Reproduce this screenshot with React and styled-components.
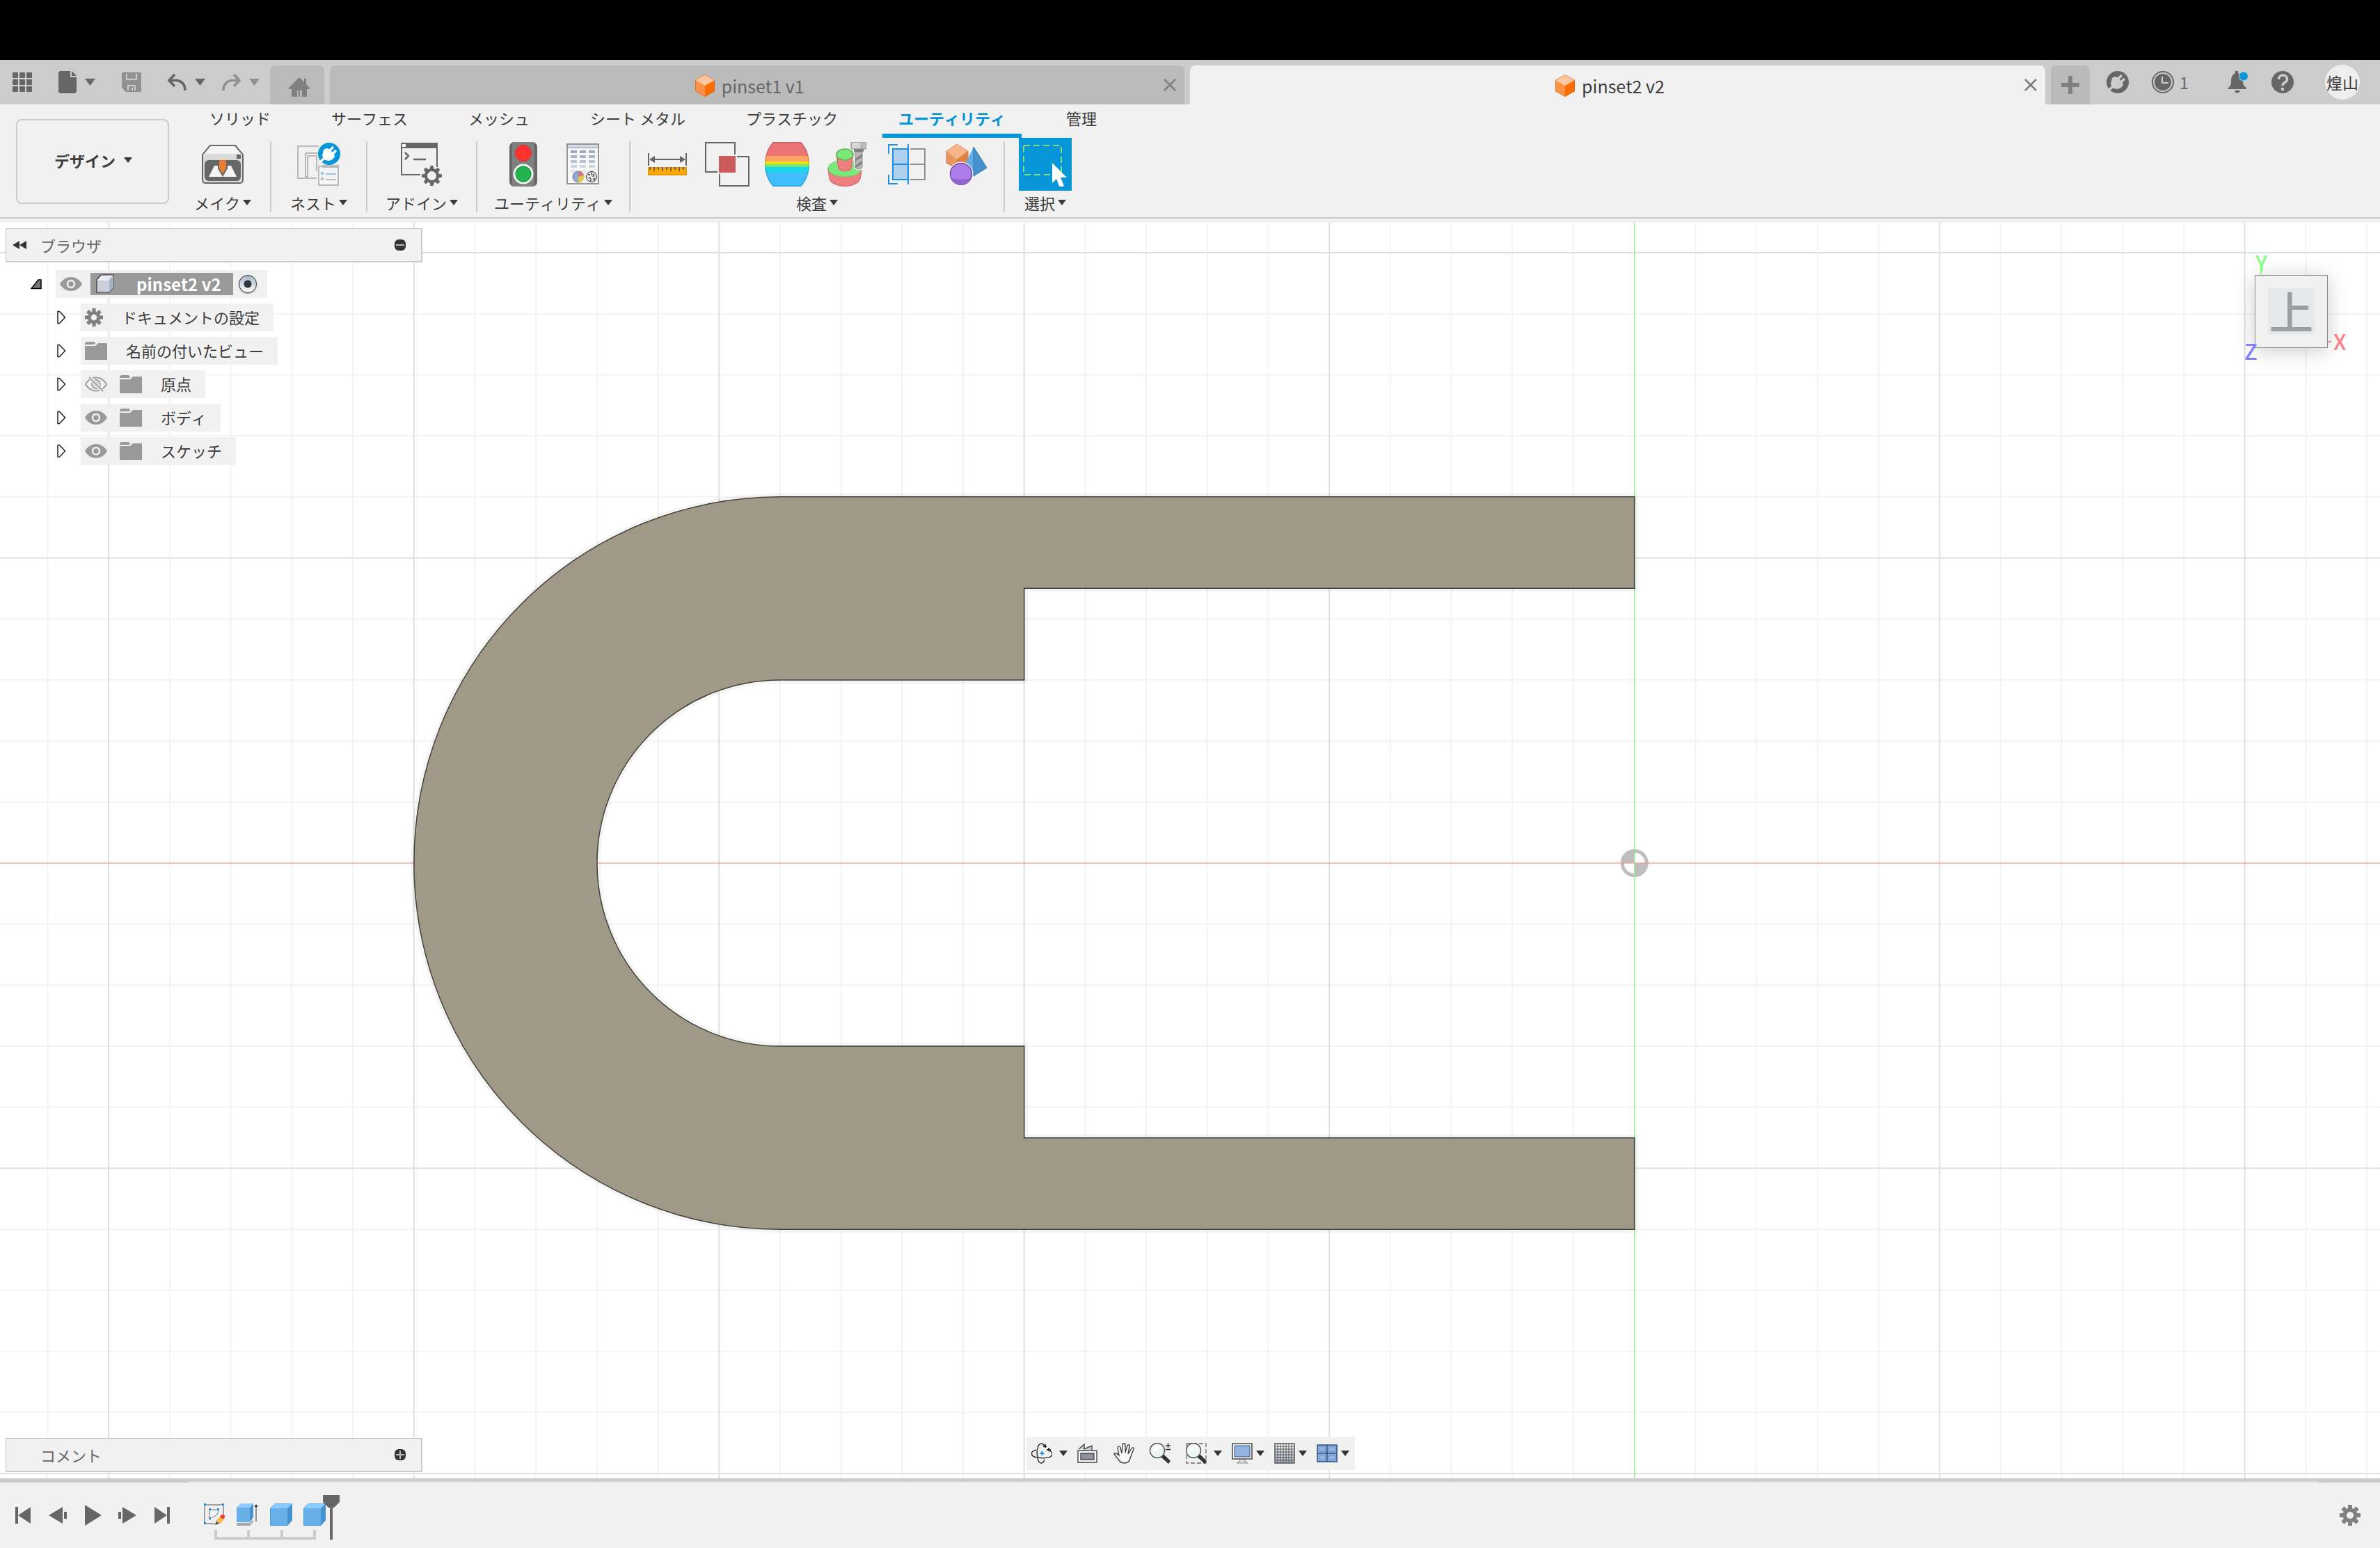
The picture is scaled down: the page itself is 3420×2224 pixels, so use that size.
import React from "react";
import styled, { createGlobalStyle } from "styled-components";

const GlobalStyle = createGlobalStyle`
  * { box-sizing: border-box; }
  html, body { margin: 0; }
  body {
    font-family: "Noto Sans CJK JP", "Noto Sans", sans-serif;
    font-size: 22px;
    font-kerning: none;
    line-height: 32px;
    color: #3c3c3c;
    background: #f1f1f1;
  }
  button {
    margin: 0;
    padding: 0;
    border: 0;
    background: none;
    font: inherit;
    font-kerning: none;
    color: inherit;
    cursor: pointer;
  }
  svg { display: block; flex: none; }
`;

/* ---------- layout ---------- */

const Screen = styled.div`
  display: flex;
  flex-direction: column;
  min-height: 100vh;
`;

const SystemStrip = styled.div`
  height: 86px;
  background: #000;
`;

const TitleBar = styled.header`
  display: flex;
  align-items: center;
  height: 64px;
  background: #ccc;
`;

const QuickAccess = styled.div`
  display: flex;
  align-items: center;
  gap: 38px;
  padding: 0 15px 0 18px;
`;

const History = styled.div`
  display: flex;
  gap: 24px;
`;

const QuickButton = styled.button`
  display: flex;
  align-items: center;
  gap: 12px;
  color: ${(p) => (p.$faded ? "#909090" : "#666")};
`;

const DocumentTabs = styled.nav`
  display: flex;
  flex: 1;
  align-self: flex-end;
  gap: 8px;
`;

const SmallTab = styled.button`
  display: flex;
  align-items: center;
  justify-content: center;
  width: ${(p) => p.$width};
  height: 56px;
  padding: ${(p) => (p.$low ? "6px 0 0 6px" : "0")};
  border-radius: 8px 8px 0 0;
  background: #bababa;
  color: #808080;
`;

const DocumentTab = styled.div`
  display: flex;
  flex: 1;
  align-items: center;
  height: 56px;
  padding: 0 12px 0 8px;
  border-radius: 8px 8px 0 0;
  background: ${(p) => (p.$active ? "#f1f1f1" : "#bababa")};
  color: ${(p) => (p.$active ? "#3c3c3c" : "#666")};
`;

const TabTitle = styled.button`
  display: flex;
  flex: 1;
  align-items: center;
  justify-content: center;
  gap: 10px;
  padding-top: 2px;
  font-size: 25px;
`;

const TabClose = styled.button`
  color: #808080;
`;

const Status = styled.div`
  display: flex;
  align-items: center;
  gap: 33px;
  padding: 0 29px 0 24px;
  color: #666;
`;

const StatusButton = styled.button`
  display: flex;
  align-items: center;
  gap: 8px;
  margin-left: ${(p) => (p.$spaced ? "21px" : "0")};
  font-size: 24px;
`;

const Avatar = styled.button`
  width: 50px;
  height: 50px;
  margin-left: 12px;
  border-radius: 50%;
  background: #eee;
  color: #3c3c3c;
  font-size: 23px;
  line-height: 48px;
  white-space: nowrap;
`;

const Ribbon = styled.section`
  display: flex;
  align-items: flex-start;
  height: 170px;
  border-bottom: 6px solid #f1f1f1;
  box-shadow: inset 0 -2px 0 #ccc;
  background: #f1f1f1;
`;

const Workspace = styled.button`
  display: flex;
  align-items: center;
  justify-content: center;
  gap: 12px;
  width: 220px;
  height: 122px;
  margin: 21px 9px 0 23px;
  padding: 0 0 4px 2px;
  border: 2px solid #ccc;
  border-radius: 8px;
  font-weight: 700;
`;

const RibbonBody = styled.div`
  flex: 1;
`;

const RibbonTabs = styled.nav`
  display: flex;
  gap: 41px;
  padding-left: 26px;
`;

const RibbonTab = styled.button`
  height: 48px;
  padding: 0 23px 4px;
  border-bottom: 6px solid ${(p) => (p.$active ? "#0696d7" : "transparent")};
  color: ${(p) => (p.$active ? "#0696d7" : "#3c3c3c")};
  font-weight: ${(p) => (p.$active ? 700 : 400)};
`;

const Groups = styled.div`
  display: flex;
`;

const Group = styled.div`
  display: flex;
  flex-direction: column;
  align-items: center;
  gap: 2px;
  height: 108px;
  padding: 0 ${(p) => p.$pad}px;
`;

const GroupDivider = styled.div`
  width: 2px;
  height: 102px;
  margin-top: 5px;
  background: #ccc;
`;

const ToolRow = styled.div`
  display: flex;
  gap: 10px;
`;

const Tool = styled.button`
  display: grid;
  place-items: center;
  width: 76px;
  height: 76px;
  background: ${(p) => (p.$active ? "#0696d7" : "none")};
`;

const GroupLabel = styled.button`
  display: flex;
  align-items: center;
  gap: 4px;
  line-height: 30px;
  white-space: nowrap;
`;

const Viewport = styled.main`
  position: relative;
  display: flex;
  flex: 1;
  flex-direction: column;
  justify-content: space-between;
  padding: 8px 0 9px 8px;
  background: #fff;
`;

const Scene = styled.svg`
  position: absolute;
  inset: 0;
  width: 100%;
  height: 100%;
`;

const Docked = styled.div`
  position: relative;
`;

const PanelBar = styled.div`
  display: flex;
  align-items: center;
  width: 599px;
  height: 49px;
  padding: 0 22px 0 9px;
  border: 1px solid #c0c0c0;
  border-right: 2px solid #ccc;
  border-bottom: 2px solid #ccc;
  background: #f1f1f1;
  color: #666;
`;

const PanelArrow = styled.button`
  width: 20px;
  height: 20px;
  margin-right: 20px;
  display: grid;
  place-items: center;
`;

const PanelName = styled.span`
  flex: 1;
`;

const Tree = styled.ul`
  display: flex;
  flex-direction: column;
  gap: 8px;
  margin: 11px 0 0;
  padding: 0;
  list-style: none;
`;

const TreeRow = styled.li`
  display: flex;
  align-items: center;
  padding-left: ${(p) => (p.$root ? "36px" : "73px")};
`;

const Twisty = styled.button`
  width: ${(p) => (p.$root ? "36px" : "35px")};
`;

const TreeItem = styled.div`
  display: flex;
  align-items: center;
  height: 40px;
  padding: 0 ${(p) => (p.$root ? "15px" : "20px")} 0 6px;
  background: #f1f1f1;
`;

const EyeButton = styled.button`
  margin-right: ${(p) => (p.$root ? "12px" : "18px")};
`;

const NodeIcon = styled.span`
  color: #808080;
`;

const NodeLabel = styled.span`
  padding: 0 0 2px 27px;
`;

const RootName = styled.label`
  display: flex;
  align-items: center;
  gap: 32px;
  height: 32px;
  margin-right: 8px;
  padding: 0 17px 0 8px;
  background: #999;
  color: #fff;
  font-size: 24px;
  font-weight: 700;
`;

const ActiveRadio = styled.input`
  appearance: none;
  width: 26px;
  height: 26px;
  margin: 0;
  border: 1px solid #333;
  border-radius: 50%;
  background: radial-gradient(circle, #30343c 0 5px, transparent 6px),
    linear-gradient(#a9b2c6, #fff);
  box-shadow: 0 1px 2px #999;
`;

const ViewCube = styled.div`
  position: absolute;
  top: 75px;
  right: 75px;
  width: 105px;
  height: 105px;
`;

const CubeFace = styled.button`
  display: grid;
  place-items: center;
  width: 105px;
  height: 105px;
  border: 1px solid #888;
  background: rgba(240, 240, 240, 0.95);
  box-shadow: 0 4px 28px rgba(0, 0, 0, 0.2);
`;

const CubeLabel = styled.span`
  width: 67px;
  height: 67px;
  background: #e7e8ec;
  color: #9a9fa4;
  font-size: 64px;
  font-weight: 500;
  line-height: 62px;
`;

const Axis = styled.span`
  position: absolute;
  left: ${(p) => p.$x}px;
  top: ${(p) => p.$y}px;
  color: ${(p) => p.$color};
  font-size: 31px;
  font-weight: 500;
`;

const AxisTick = styled.span`
  position: absolute;
  left: ${(p) => p.$x}px;
  top: ${(p) => p.$y}px;
  width: ${(p) => p.$w}px;
  height: ${(p) => p.$h}px;
  background: ${(p) => p.$color};
`;

const BottomRow = styled.div`
  position: relative;
  display: grid;
  grid-template-columns: 1fr auto 1fr;
  align-items: end;
  padding-right: 6px;
`;

const NavBar = styled.div`
  display: flex;
  align-items: center;
  gap: 14px;
  height: 48px;
  margin-bottom: 3px;
  padding: 0 8px 0 7px;
  background: #f1f1f1;
`;

const NavPlain = styled.div`
  display: flex;
  gap: 22px;
`;

const NavButton = styled.button`
  display: flex;
  align-items: center;
  gap: ${(p) => (p.$wide ? "10px" : "5px")};
  color: #333;
`;

const Timeline = styled.footer`
  display: flex;
  height: 100px;
  border-top: 4px solid #cacaca;
`;

const Playback = styled.div`
  display: flex;
  align-items: center;
  gap: 24px;
  width: 270px;
  padding-left: 20px;
  border-top: 2px solid #cacaca;
  color: #666;
`;

const Track = styled.div`
  display: flex;
  flex: 1;
  align-items: flex-start;
  padding: 18px 0 0 22px;
  border-top: 2px solid #ddd;
`;

const Features = styled.div`
  padding-top: 12px;
`;

const FeatureRow = styled.div`
  display: flex;
  gap: 16px;
`;

const Bracket = styled.div`
  display: grid;
  grid-template-columns: repeat(3, 1fr);
  width: 146px;
  height: 14px;
  margin: 6px 0 0 16px;
  border: 4px solid #ccc;
  border-width: 0 4px 4px 0;
`;

const BracketTick = styled.span`
  border-left: 4px solid #ccc;
`;

const Playhead = styled.button`
  margin-left: -4px;
`;

const TimelineSettings = styled.button`
  display: flex;
  align-items: center;
  width: 90px;
  padding-left: 32px;
  border-top: 2px solid #cacaca;
  color: #808080;
`;

/* ---------- small glyphs ---------- */

const Caret = ({ w = 12, h = 8 }) => (
  <svg width={w} height={h} viewBox="0 0 12 8" preserveAspectRatio="none" fill="currentColor"><path d="M0 0h12L6 8z" /></svg>
);

const toothAngles = [0, 45, 90, 135, 180, 225, 270, 315];

const Gear = ({ size, hole = "#f1f1f1" }) => (
  <svg width={size} height={size} viewBox="0 0 30 30" fill="currentColor">
    {toothAngles.map((a) => <rect key={a} x="12" y="0" width="6" height="8" transform={`rotate(${a} 15 15)`} />)}
    <circle cx="15" cy="15" r="10.5" />
    <circle cx="15" cy="15" r="5" fill={hole} />
  </svg>
);

const Folder = () => (
  <svg width="32" height="26" viewBox="0 0 32 26" fill="#999">
    <path d="M2 0h11l2 2-1 2H0V2z" />
    <path d="M0 6h15l4-4h13v24H0z" />
  </svg>
);

const Eye = () => (
  <svg width="32" height="20" viewBox="0 0 32 20">
    <path d="M0 10C4 3 10 0 16 0s12 3 16 10c-4 7-10 10-16 10S4 17 0 10z" fill="#999" />
    <circle cx="16" cy="10" r="5" fill="none" stroke="#f1f1f1" strokeWidth="2.5" />
  </svg>
);

const EyeOff = () => (
  <svg width="32" height="22" viewBox="0 0 32 22" fill="none" stroke="#999" strokeWidth="1.8">
    <path d="M1 11C5 4 10 1.500 16 1.500S27 4 31 11c-4 7-9 9.500-15 9.500S5 18 1 11z" />
    <circle cx="16" cy="11" r="6" />
    <circle cx="16" cy="11" r="2.500" />
    <path d="M6 0l20 22" stroke="#f1f1f1" strokeWidth="5" />
    <path d="M6 1l20 20" />
  </svg>
);

const OrangeCube = () => (
  <svg width="28" height="32" viewBox="0 0 28 32">
    <path d="M14 0l14 8-14 8L0 8z" fill="#ffc8a0" />
    <path d="M0 8l14 8v16L0 24z" fill="#ff9248" />
    <path d="M28 8l-14 8v16l14-8z" fill="#ff6c00" />
    <path d="M14 .500l13.500 7.700v15.600L14 31.500.500 23.800V8.200z" fill="none" stroke="#c9640f" strokeOpacity=".6" />
  </svg>
);

const Cross = () => (
  <svg width="18" height="18" viewBox="0 0 18 18" stroke="currentColor" strokeWidth="2.600"><path d="M1 1l16 16M17 1L1 17" /></svg>
);

const AppGrid = () => (
  <svg width="28" height="28" viewBox="0 0 28 28" fill="currentColor">
    {[0, 10, 20].map((y) => [0, 10, 20].map((x) => <rect key={`${x}-${y}`} x={x} y={y} width="8" height="8" rx="1" />))}
  </svg>
);

const FileGlyph = () => (
  <svg width="26" height="32" viewBox="0 0 26 32" fill="currentColor"><path d="M2 0h15v9h9v21l-2 2H2l-2-2V2z" /><path d="M19 0l7 7h-7z" /></svg>
);

const SaveGlyph = () => (
  <svg width="28" height="28" viewBox="0 0 28 28">
    <path d="M1 0h26l1 1v26l-1 1H6l-6-6V1z" fill="currentColor" />
    <path d="M7 2v8h14V2M9 26v-7h10v7" fill="none" stroke="#ccc" strokeWidth="2" />
    <path d="M15 22v4" stroke="#ccc" strokeWidth="2" />
  </svg>
);

const UndoGlyph = ({ flip }) => (
  <svg width="27" height="24" viewBox="0 0 27 24" fill="none" stroke="currentColor" strokeWidth="3.600">
    <path transform={flip ? "matrix(-1 0 0 1 27 0)" : undefined} d="M10 1L2 9.500l8 8.500M2 9.500h9c9 0 14 6 14 14.500" />
  </svg>
);

const HomeGlyph = () => (
  <svg width="30" height="28" viewBox="0 0 30 28" fill="#808080">
    <path d="M15 0l7 7V2h3v8l5 5v2h-4v11h-7v-9h-7v9H4V17H0v-2z" /><path d="M14 19h2v9h-2z" />
  </svg>
);

const PlusGlyph = () => (
  <svg width="26" height="26" viewBox="0 0 26 26" fill="currentColor"><path d="M10 0h6v10h10v6H16v10h-6V16H0v-6h10z" /></svg>
);

const PlugShape = () => (
  <>
    <path d="M8 10l4-2 4 1 7 7 1 4-3 4-5 2-6-1-4-6z" />
    <path d="M9 22l-6 6M16 12l6-6M20 17l6-6" stroke="currentColor" strokeWidth="3.500" />
  </>
);

const ExtensionGlyph = () => (
  <svg width="32" height="32" viewBox="0 0 32 32">
    <circle cx="16" cy="16" r="16" fill="#666" />
    <g fill="#ccc" color="#ccc"><PlugShape /></g>
  </svg>
);

const ClockGlyph = () => (
  <svg width="32" height="32" viewBox="0 0 32 32">
    <circle cx="16" cy="16" r="15" fill="none" stroke="#666" strokeWidth="2" />
    <circle cx="16" cy="16" r="12" fill="#666" />
    <path d="M15 8v9h9" fill="none" stroke="#ccc" strokeWidth="2" />
  </svg>
);

const BellGlyph = () => (
  <svg width="32" height="32" viewBox="0 0 32 32">
    <path d="M13 0h4v3c5 2 7 6 7 12 0 5 2 7 5 9v2H3v-2c3-2 4-4 4-9 0-6 2-10 6-12zM12 28h8c-1 5-7 5-8 0z" fill="#666" />
    <circle cx="25" cy="7.500" r="7" fill="#ccc" /><circle cx="25" cy="7.500" r="6" fill="#0696d7" />
  </svg>
);

const HelpGlyph = () => (
  <svg width="32" height="32" viewBox="0 0 32 32">
    <circle cx="16" cy="16" r="16" fill="#666" />
    <path d="M10.500 12c0-8 12-8 12 0 0 5-6.500 4-6.500 9" fill="none" stroke="#ccc" strokeWidth="3.600" />
    <path d="M14 24h4v4h-4z" fill="#ccc" />
  </svg>
);

/* ---------- ribbon tools ---------- */

const MakeIcon = () => (
  <svg width="60" height="56" viewBox="0 0 60 56">
    <path d="M12 1h36l11 13v36q0 5-5 5H6q-5 0-5-5V14z" fill="#f4f4f4" stroke="#666" strokeWidth="2" />
    <path d="M2 13h56v37q0 4-4 4H6q-4 0-4-4z" fill="#dadada" />
    <rect x="4" y="22" width="52" height="30" rx="6" fill="#666" />
    <path d="M18 30h24l8 16H10z" fill="#f4f4f4" />
    <path d="M24 23h12v11l-6 10-6-10z" fill="#e87c32" stroke="#666" strokeWidth="2" />
    <path d="M25 23h10" stroke="#e87c32" strokeWidth="2" />
    <rect x="50" y="14" width="6" height="6" fill="#666" />
  </svg>
);

const NestIcon = () => (
  <svg width="62" height="62" viewBox="0 0 62 62" fill="none">
    <path d="M31 5H1v46h11V15h18M16 49h-4M15 51V19h13v22M28 51H12" stroke="#bababa" strokeWidth="2" />
    <rect x="31" y="34" width="28" height="27" stroke="#bababa" strokeWidth="2" fill="#f4f4f4" />
    <path d="M36 32h24v4H36z" fill="#bababa" />
    <path d="M34 42h4v4h-4z" fill="#96c8ee" /><path d="M41 45h15" stroke="#96c8ee" strokeWidth="2" />
    <path d="M34 50h4v4h-4z" fill="#bababa" /><path d="M41 53h15" stroke="#bababa" strokeWidth="2" />
    <circle cx="46" cy="16" r="16" fill="#0696d7" />
    <g transform="translate(30 0)" fill="#fff" color="#fff"><PlugShape /></g>
  </svg>
);

const AddInIcon = () => (
  <svg width="60" height="63" viewBox="0 0 60 63">
    <path d="M1 1h51v34M1 1v45h27" fill="none" stroke="#666" strokeWidth="2" />
    <path d="M0 0h53v8H0z" fill="#666" /><path d="M2 2h5v4H2z" fill="#fff" />
    <path d="M6 14l5 5-5 5M18 24h18" fill="none" stroke="#666" strokeWidth="2.500" />
    <g transform="translate(30 33)" fill="#666">
      {toothAngles.map((a) => <path key={a} d="M12.500 0h4l1.500 7h-7z" transform={`rotate(${a} 14.500 14.500)`} />)}
      <circle cx="14.500" cy="14.500" r="8.500" fill="#f1f1f1" stroke="#666" strokeWidth="4" />
    </g>
  </svg>
);

const TrafficIcon = () => (
  <svg width="40" height="64" viewBox="0 0 40 64">
    <rect width="40" height="64" rx="7" fill="#666" /><rect x="4" width="32" height="64" rx="4" fill="#808080" />
    <circle cx="20" cy="16" r="11.500" fill="#ff3232" stroke="#d12a2a" />
    <circle cx="20" cy="46" r="13" fill="#24b352" stroke="#f4f4f4" strokeWidth="3" />
    <circle cx="20" cy="46" r="11" fill="none" stroke="#189a40" />
  </svg>
);

const SheetIcon = () => (
  <svg width="48" height="60" viewBox="0 0 48 60">
    <path d="M1 1h45v57H1z" fill="#f7f8fa" stroke="#777" strokeWidth="1.500" />
    <path d="M2 2h43v4H2z" fill="#d4d9e6" /><path d="M2 6.500h43" stroke="#8d94a4" />
    {["#a0a9c0", "#aab4c8", "#bac1d2", "#ced3e0", "#e4e6ee"].map((c, i) => (
      <path key={c} d={`M6 ${10 + i * 7}h9v4H6zm13 0h9v4h-9zm13 0h9v4h-9z`} fill={c} />
    ))}
    <circle cx="17" cy="48" r="8" fill="#8ea9d8" stroke="#777" />
    <path d="M17 48v-8a8 8 0 0 1 8 6z" fill="#d07582" /><path d="M17 48l8-2a8 8 0 0 1-8 10z" fill="#e9c93d" />
    <circle cx="36" cy="48" r="7.500" fill="#e4e4e4" stroke="#333" />
    <path d="M31 44l3 2m2-4l1 4m3-2l-2 4m-6 1l3 2m3 1l3-2m-7 4l2-2m4 2l1-2" stroke="#333" strokeWidth="1.300" />
  </svg>
);

const MeasureIcon = () => (
  <svg width="56" height="32" viewBox="0 0 56 32">
    <path d="M1 0v18M55 0v18M6 9h44" stroke="#666" strokeWidth="2" />
    <path d="M2 9l8-5v10zM54 9l-8-5v10z" fill="#666" />
    <path d="M1 21h54v10H1z" fill="#ffa900" stroke="#e79a08" strokeWidth="2" />
    <path d="M3 20v4M9 20v6M15 20v4M21 20v6M27 20v4M33 20v6M39 20v4M45 20v6M51 20v4" stroke="#666" strokeWidth="2" />
  </svg>
);

const InterferenceIcon = () => (
  <svg width="64" height="64" viewBox="0 0 64 64" fill="none" stroke="#666" strokeWidth="2">
    <path d="M18 43H1V1h42v17M46 21h17v42H21V46" /><path d="M20 20h24v24H20z" fill="#cd5b5b" stroke="none" />
  </svg>
);

const barrel = "M12 0h40c16 16 16 48 0 64H12C-4 48-4 16 12 0z";

const CurvatureIcon = () => (
  <svg width="64" height="64" viewBox="0 0 64 64">
    <clipPath id="barrel"><path d={barrel} /></clipPath>
    <g clipPath="url(#barrel)">
      <path d="M0 0h64v20H0z" fill="#eb7474" /><path d="M0 20h64v8H0z" fill="#ffa264" />
      <path d="M0 28h64v4H0z" fill="#ebe416" /><path d="M0 32h64v4H0z" fill="#72e878" />
      <path d="M0 36h64v8H0z" fill="#18d6e8" /><path d="M0 44h64v20H0z" fill="#40bdff" />
      <path d={barrel} fill="none" stroke="#000" strokeOpacity=".15" strokeWidth="3" />
    </g>
  </svg>
);

const AccessIcon = () => (
  <svg width="56" height="64" viewBox="0 0 56 64">
    <path d="M1 38l2 14c3 15 41 15 44 0l2-14z" fill="#f08080" stroke="#d76c6c" strokeWidth="1.500" />
    <ellipse cx="25" cy="38" rx="24" ry="12" fill="#7de87a" stroke="#67c965" />
    <path d="M13 17l3 20c2 6 16 6 18 0l3-20z" fill="#f08080" stroke="#d76c6c" strokeWidth="1.500" />
    <ellipse cx="25" cy="18" rx="12" ry="8" fill="#7de87a" stroke="#58b356" strokeWidth="1.500" />
    <path d="M38 13h14v25q-7 5-14 0z" fill="#f4f4f4" />
    <path d="M40 14h10v23q-5 4-10 0z" fill="#b8b8b8" stroke="#888" />
    <path d="M40 24l10-7v4l-10 7zM40 34l10-7v4l-10 7z" fill="#808080" />
    <path d="M38 10h14v4H38z" fill="#808080" /><path d="M34 0h22v10H34z" fill="#bababa" stroke="#909090" /><path d="M35 1h12v8H35z" fill="#d8d8d8" />
  </svg>
);

const SectionIcon = () => (
  <svg width="54" height="58" viewBox="0 0 54 58" fill="none" stroke="#1a90e6" strokeWidth="2">
    <path d="M7 7h22v44H7z" fill="#aed1ee" /><path d="M32 7h21v44H32M32 29h21" stroke="#909090" />
    <path d="M7 29h22M29 0v58M1 14V1h13M1 44v13h13" />
  </svg>
);

const ComponentsIcon = () => (
  <svg width="60" height="60" viewBox="0 0 60 60">
    <path d="M16 1l16 10v18L16 36 1 28V11z" fill="#e89560" stroke="#c47a48" />
    <path d="M16 1l16 10-16 12L1 11z" fill="#f7b587" /><path d="M16 23l16-12v18l-16 7z" fill="#dc8245" />
    <path d="M40 5L25 36l15 12z" fill="#66aee6" /><path d="M40 5l19 30-19 12z" fill="#4592cf" stroke="#2f78b4" />
    <circle cx="22" cy="44" r="17.500" fill="#f4f4f4" /><circle cx="22" cy="44" r="15.500" fill="#ab7ee8" stroke="#6f47a8" strokeWidth="1.500" />
    <path d="M7 50q15 4 30 0c-5 13-25 13-30 0z" fill="#8f63cf" />
  </svg>
);

const SelectIcon = () => (
  <svg width="64" height="64" viewBox="0 0 64 64">
    <path d="M1 5h54v42H1z" fill="none" stroke="#80e080" strokeWidth="2" strokeDasharray="9 5" />
    <path d="M42 30v29l6-6 5 13 6-3-5-12h9z" fill="#fff" />
  </svg>
);

/* ---------- navigation tools ---------- */

const OrbitIcon = () => (
  <svg width="30" height="30" viewBox="0 0 30 30" fill="none" stroke="#333" strokeWidth="1.500">
    <path d="M19 24c-3 8-9 6-10-3C7 12 9 1 14.500 1c2 0 3.500 1.500 4.500 4" /><path d="M7 10C-3 13-1 20 9 21c11 2 21 0 21-5 0-2-2-4-5-5" />
    <path d="M17 5h5M20 2v5M22 10h6M25 7v5" strokeWidth="2" /><path d="M15.500 12v6M12.500 15h6" stroke="#1a90e6" strokeWidth="2" />
  </svg>
);

const LookAtIcon = () => (
  <svg width="30" height="30" viewBox="0 0 30 30" stroke="#444" strokeWidth="1.400">
    <path d="M2 9l8-7v7l11-5v6" fill="#ccd2da" /><path d="M1 11h27v17H1z" fill="#fff" /><path d="M5 15h19v9H5z" fill="#8d929e" />
  </svg>
);

const HandIcon = () => (
  <svg width="30" height="30" viewBox="0 0 30 30">
    <path d="M8 25L1 16c0-2 3-2 7 2L6 7c0-2 3-3 4 0l2 8L13 3c0-3 4-3 4 0v11l3-10c1-2 4-2 3 1l-2 11 5-8c1-2 4-1 3 1l-5 13c-1 5-4 7-8 7-4 0-6-1-8-4z" fill="#f8f8f8" stroke="#444" strokeWidth="1.400" />
  </svg>
);

const Lens = () => (
  <><path d="M18 18l3-1 9 9-3 4-10-9z" fill="#333" /><circle cx="11" cy="11" r="10.500" fill="#ecf6f4" stroke="#555" strokeWidth="1.500" /><path d="M5 8q3-5 8-5 4 1 5 4-7 0-11 6z" fill="#fff" /></>
);

const ZoomIcon = () => (
  <svg width="30" height="30" viewBox="0 0 30 30"><Lens /><path d="M23 4h7M26.500 0v7M23 9.500h7" stroke="#333" strokeWidth="1.300" /></svg>
);

const ZoomWindowIcon = () => (
  <svg width="30" height="30" viewBox="0 0 30 30"><path d="M1 1h28v28H1z" fill="none" stroke="#666" strokeDasharray="6 3" strokeWidth="1.300" /><Lens /></svg>
);

const MonitorIcon = () => (
  <svg width="30" height="30" viewBox="0 0 30 30" stroke="#444"><path d="M11 23h8v4l4 2H7l4-2z" fill="#ddd" stroke="#888" /><path d="M1 1h28v22H1z" fill="#fff" strokeWidth="1.500" /><path d="M4 4h22v16H4z" fill="#92b4de" stroke="#2d4e80" /></svg>
);

const GridIcon = () => (
  <svg width="30" height="30" viewBox="0 0 30 30" stroke="#555">
    <defs><linearGradient id="gridFade" x2="0" y2="1"><stop stopColor="#fff" /><stop offset="1" stopColor="#a9b2c9" /></linearGradient></defs>
    <path d="M1 1h28v28H1z" fill="url(#gridFade)" strokeWidth="1.500" /><path d="M5 1v28M9 1v28M13 1v28M17 1v28M21 1v28M25 1v28M1 5h28M1 9h28M1 13h28M1 17h28M1 21h28M1 25h28" />
  </svg>
);

const ViewportsIcon = () => (
  <svg width="30" height="26" viewBox="0 0 30 26" fill="#92b4de" stroke="#2d4e80"><path d="M1 1h28v24H1z" strokeWidth="1.500" /><path d="M15 1v24M1 13h28" strokeWidth="1.500" /><path d="M3.500 3.500h9v7h-9zM17.500 3.500h9v7h-9zM3.500 15.500h9v7h-9zM17.500 15.500h9v7h-9z" stroke="#6a8fc4" /></svg>
);

/* ---------- timeline features ---------- */

const SketchFeature = () => (
  <svg width="32" height="32" viewBox="0 0 32 32" fill="none">
    <path d="M2 2h27v18M2 2v27h15" stroke="#888" strokeWidth="1.500" /><path d="M9 9h13q0 10-13 12z" stroke="#777" />
    <path d="M1 0h3v3H1zM27 0h3v3h-3zM1 27h3v3H1zM8 7h3v3H8zM20 7h3v3h-3zM8 20h3v3H8z" fill="#1a90e6" />
    <path d="M17 31l2-6 4 4z" fill="#555" /><path d="M19 25l6-7 5 4-6 7z" fill="#fcbf4a" stroke="#d99a20" strokeWidth=".6" /><circle cx="28" cy="19" r="3" fill="#fa3232" />
  </svg>
);

const ExtrudeFeature = () => (
  <svg width="32" height="32" viewBox="0 0 32 32">
    <path d="M0 28h19l5-5v4l-5 5H0z" fill="#aaa" /><path d="M0 6l6-6h18l-5 6z" fill="#8ccaff" /><path d="M19 6l5-6v20l-5 7z" fill="#4592cf" />
    <path d="M0 6h19v21H0z" fill="#69afe8" /><path d="M28 26V4" stroke="#333" /><path d="M25.500 5L28 1l2.500 4z" fill="#333" />
  </svg>
);

const SolidFeature = () => (
  <svg width="32" height="32" viewBox="0 0 32 32">
    <path d="M0 7l7-7h25l-7 7z" fill="#8ccaff" /><path d="M25 7l7-7v24l-7 8z" fill="#4592cf" /><path d="M0 7h25v25H0z" fill="#69afe8" />
    <path d="M.500 7.500L7 .500h24.500v24l-6.500 7H.500z" fill="none" stroke="#4592cf" strokeOpacity=".6" />
  </svg>
);

/* ---------- model scene ---------- */

const UNIT = 87.7;
const ORIGIN = { x: 2348.7, y: 920 };
const steps = (from, to) => Array.from({ length: to - from + 1 }, (_, i) => from + i);
const px = (n) => ORIGIN.x + n * UNIT;
const py = (n) => ORIGIN.y - n * UNIT;

const bodyPath = [
  `M${px(0)} ${py(6)}H${px(-14)}`,
  `A${6 * UNIT} ${6 * UNIT} 0 0 0 ${px(-14)} ${py(-6)}`,
  `H${px(0)}V${py(-4.5)}H${px(-10)}V${py(-3)}H${px(-14)}`,
  `A${3 * UNIT} ${3 * UNIT} 0 0 1 ${px(-14)} ${py(3)}`,
  `H${px(-10)}V${py(4.5)}H${px(0)}Z`,
].join("");

const gridTone = (n) => (n % 5 === 0 ? "#e0e0e0" : "#f3f3f3");

const ModelScene = () => (
  <Scene viewBox="0 0 3420 1804" preserveAspectRatio="xMidYMid slice">
    {steps(-26, 12).filter((n) => n % 5).map((n) => <path key={n} d={`M${px(n)} 0V1804`} stroke={gridTone(n)} strokeWidth="2" />)}
    {steps(-10, 10).filter((n) => n % 5).map((n) => <path key={n} d={`M0 ${py(n)}H3420`} stroke={gridTone(n)} strokeWidth="2" />)}
    {steps(-26, 12).filter((n) => n && n % 5 === 0).map((n) => <path key={n} d={`M${px(n)} 0V1804`} stroke={gridTone(n)} strokeWidth="2" />)}
    {steps(-10, 10).filter((n) => n && n % 5 === 0).map((n) => <path key={n} d={`M0 ${py(n)}H3420`} stroke={gridTone(n)} strokeWidth="2" />)}
    <circle cx={ORIGIN.x} cy={ORIGIN.y} r="20" fill="#bebebe" />
    <path d={`M${ORIGIN.x} ${ORIGIN.y}v-15a15 15 0 0 1 15 15zM${ORIGIN.x} ${ORIGIN.y}v15a15 15 0 0 1-15-15z`} fill="#fff" />
    <path d={`M0 ${ORIGIN.y}H3420`} stroke="#ff8c8c" strokeOpacity=".6" strokeWidth="2" />
    <path d={`M${ORIGIN.x} 0V1804`} stroke="#78f878" strokeOpacity=".8" strokeWidth="1.500" />
    <path d={bodyPath} fill="none" stroke="#000" strokeOpacity=".04" strokeWidth="10" />
    <path d={bodyPath} fill="#a09988" stroke="#44423c" strokeWidth="1.500" />
  </Scene>
);

/* ---------- content ---------- */

const ribbonTabs = ["ソリッド", "サーフェス", "メッシュ", "シート メタル", "プラスチック", "ユーティリティ", "管理"];

const groups = [
  { label: "メイク", pad: 27, tools: [MakeIcon] },
  { label: "ネスト", pad: 27, tools: [NestIcon] },
  { label: "アドイン", pad: 26, tools: [AddInIcon] },
  { label: "ユーティリティ", pad: 24, tools: [TrafficIcon, SheetIcon] },
  { label: "検査", pad: 15, tools: [MeasureIcon, InterferenceIcon, CurvatureIcon, AccessIcon, SectionIcon, ComponentsIcon] },
  { label: "選択", pad: 20, tools: [SelectIcon], active: true },
];

const nodes = [
  { label: "ドキュメントの設定", gear: true },
  { label: "名前の付いたビュー" },
  { label: "原点", eye: EyeOff },
  { label: "ボディ", eye: Eye },
  { label: "スケッチ", eye: Eye },
];

const playback = [
  { name: "先頭へ", d: "M2 3h4v24H2zM6 15L24 3v24z" },
  { name: "前へ", d: "M0 15L20 3v24zM22 10h4v10h-4z" },
  { name: "再生", d: "M2 0l24 15L2 30z" },
  { name: "次へ", d: "M0 10h4v10H0zM6 3l20 12L6 27z" },
  { name: "末尾へ", d: "M2 3l18 12L2 27zM20 3h4v24h-4z" },
];

function DocTab({ title, active }) {
  return (
    <DocumentTab $active={active}>
      <TabTitle><OrangeCube />{title}</TabTitle>
      <TabClose aria-label="閉じる"><Cross /></TabClose>
    </DocumentTab>
  );
}

function Panel({ name, arrow, sign }) {
  return (
    <PanelBar>
      <PanelArrow as={arrow ? "button" : "span"} aria-label={arrow ? "折りたたむ" : undefined}>
        {arrow && <svg width="20" height="12" viewBox="0 0 20 12" fill="#333"><path d="M0 6l10-6v12zM10 6l10-6v12z" /></svg>}
      </PanelArrow>
      <PanelName>{name}</PanelName>
      <button aria-label={name}>
        <svg width="16" height="16" viewBox="0 0 16 16">
          <rect width="16" height="16" rx="6" fill="#333" />
          <path d={sign === "plus" ? "M2 8h12M8 2v12" : "M2 8h12"} stroke="#bbb" strokeWidth="2" />
        </svg>
      </button>
    </PanelBar>
  );
}

function Browser() {
  return (
    <Docked>
      <Panel name="ブラウザ" arrow sign="minus" />
      <Tree>
        <TreeRow $root>
          <Twisty $root aria-label="閉じる">
            <svg width="16" height="15" viewBox="0 0 16 15"><path d="M1 13.500L11 1h4v12.500z" fill="#777" stroke="#000" strokeWidth="1.500" /></svg>
          </Twisty>
          <TreeItem $root>
            <EyeButton $root aria-label="表示"><Eye /></EyeButton>
            <RootName htmlFor="active-component">
              <svg width="26" height="28" viewBox="0 0 26 28" stroke="#333" strokeWidth="1.200">
                <path d="M1 8l6-7h18v18l-6 7H1z" fill="#e8ecf2" /><path d="M19 8l6-7v18l-6 7z" fill="#a8b4c4" stroke="none" /><path d="M2 9h17v16H2z" fill="#ccd0da" stroke="none" />
              </svg>
              pinset2 v2
            </RootName>
            <ActiveRadio type="radio" id="active-component" name="component" defaultChecked />
          </TreeItem>
        </TreeRow>
        {nodes.map(({ label, gear, eye: EyeIcon }) => (
          <TreeRow key={label}>
            <Twisty aria-label="開く">
              <svg width="14" height="20" viewBox="0 0 14 20"><path d="M2 1.500h2.500L12.500 10l-8 8.500H2z" fill="#fff" stroke="#222" strokeWidth="1.500" /></svg>
            </Twisty>
            <TreeItem>
              {EyeIcon && <EyeButton aria-label="表示"><EyeIcon /></EyeButton>}
              <NodeIcon>{gear ? <Gear size={26} /> : <Folder />}</NodeIcon>
              <NodeLabel>{label}</NodeLabel>
            </TreeItem>
          </TreeRow>
        ))}
      </Tree>
    </Docked>
  );
}

export default function App() {
  return (
    <Screen>
      <GlobalStyle />
      <SystemStrip />
      <TitleBar>
        <QuickAccess>
          <QuickButton aria-label="データ パネル"><AppGrid /></QuickButton>
          <QuickButton aria-label="ファイル"><FileGlyph /><Caret w={15} h={10} /></QuickButton>
          <QuickButton aria-label="保存" $faded><SaveGlyph /></QuickButton>
          <History>
            <QuickButton aria-label="元に戻す"><UndoGlyph /><Caret w={15} h={10} /></QuickButton>
            <QuickButton aria-label="やり直し" $faded><UndoGlyph flip /><Caret w={15} h={10} /></QuickButton>
          </History>
        </QuickAccess>
        <DocumentTabs>
          <SmallTab $width="78px" $low aria-label="ホーム"><HomeGlyph /></SmallTab>
          <DocTab title="pinset1 v1" />
          <DocTab title="pinset2 v2" active />
          <SmallTab $width="56px" aria-label="新規"><PlusGlyph /></SmallTab>
        </DocumentTabs>
        <Status>
          <StatusButton aria-label="拡張機能"><ExtensionGlyph /></StatusButton>
          <StatusButton><ClockGlyph />1</StatusButton>
          <StatusButton $spaced aria-label="通知"><BellGlyph /></StatusButton>
          <StatusButton aria-label="ヘルプ"><HelpGlyph /></StatusButton>
          <Avatar>煌山</Avatar>
        </Status>
      </TitleBar>

      <Ribbon>
        <Workspace>デザイン<Caret /></Workspace>
        <RibbonBody>
          <RibbonTabs>
            {ribbonTabs.map((t) => <RibbonTab key={t} $active={t === "ユーティリティ"}>{t}</RibbonTab>)}
          </RibbonTabs>
          <Groups>
            {groups.map(({ label, pad, tools, active }, index) => (
              <React.Fragment key={label}>
                {index > 0 && <GroupDivider />}
                <Group $pad={pad}>
                  <ToolRow>
                    {tools.map((Icon, i) => <Tool key={i} $active={active} aria-label={`${label} ${i + 1}`}><Icon /></Tool>)}
                  </ToolRow>
                  <GroupLabel>{label}<Caret /></GroupLabel>
                </Group>
              </React.Fragment>
            ))}
          </Groups>
        </RibbonBody>
      </Ribbon>

      <Viewport>
        <ModelScene />
        <Browser />
        <ViewCube>
          <CubeFace><CubeLabel>上</CubeLabel></CubeFace>
          <AxisTick $x={8} $y={-5} $w={2} $h={5} $color="#80ff80" />
          <AxisTick $x={105} $y={95} $w={5} $h={2} $color="#ff8080" />
          <Axis $x={1} $y={-34} $color="#80ff80">Y</Axis>
          <Axis $x={113} $y={79} $color="#ff8080">X</Axis>
          <Axis $x={-15} $y={93} $color="#8080ff">Z</Axis>
        </ViewCube>
        <BottomRow>
          <Panel name="コメント" sign="plus" />
          <NavBar>
            <NavButton $wide aria-label="オービット"><OrbitIcon /><Caret /></NavButton>
            <NavPlain>
              <NavButton aria-label="ビュー正面"><LookAtIcon /></NavButton>
              <NavButton aria-label="画面移動"><HandIcon /></NavButton>
              <NavButton aria-label="ズーム"><ZoomIcon /></NavButton>
              <NavButton $wide aria-label="窓ズーム"><ZoomWindowIcon /><Caret /></NavButton>
            </NavPlain>
            <NavButton aria-label="表示設定"><MonitorIcon /><Caret /></NavButton>
            <NavButton aria-label="グリッド"><GridIcon /><Caret /></NavButton>
            <NavButton aria-label="ビューポート"><ViewportsIcon /><Caret /></NavButton>
          </NavBar>
        </BottomRow>
      </Viewport>

      <Timeline>
        <Playback>
          {playback.map(({ name, d }) => (
            <button key={name} aria-label={name}>
              <svg width="26" height="30" viewBox="0 0 26 30" fill="currentColor"><path d={d} /></svg>
            </button>
          ))}
        </Playback>
        <Track>
          <Features>
            <FeatureRow>
              <button aria-label="スケッチ1"><SketchFeature /></button>
              <button aria-label="押し出し1"><ExtrudeFeature /></button>
              <button aria-label="ボディ1"><SolidFeature /></button>
              <button aria-label="ボディ2"><SolidFeature /></button>
            </FeatureRow>
            <Bracket><BracketTick /><BracketTick /><BracketTick /></Bracket>
          </Features>
          <Playhead aria-label="履歴マーカー">
            <svg width="24" height="64" viewBox="0 0 24 64" fill="#666"><path d="M0 0h24v10l-8 8h-2v46h-4V18H8l-8-8z" /></svg>
          </Playhead>
        </Track>
        <TimelineSettings aria-label="設定"><Gear size={30} /></TimelineSettings>
      </Timeline>
    </Screen>
  );
}
